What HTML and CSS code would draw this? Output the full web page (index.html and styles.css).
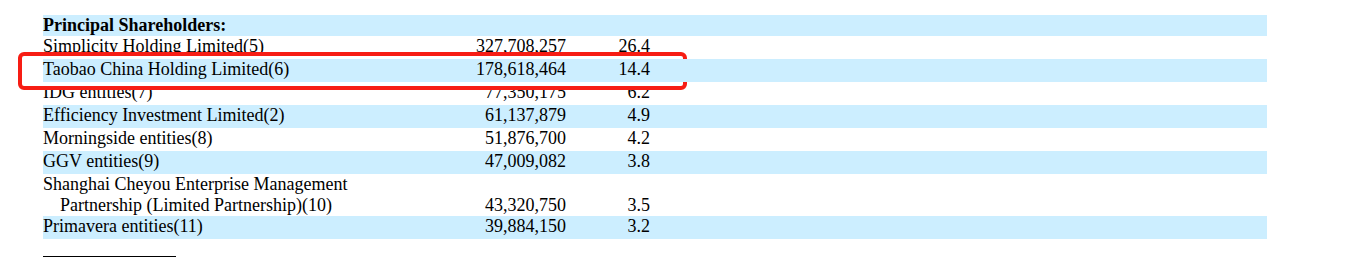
FILE: index.html
```html
<!DOCTYPE html>
<html>
<head>
<meta charset="utf-8">
<link rel="stylesheet" href="styles.css">
</head>
<body>
<div class="sheet">
  <div class="row head band"><div class="label">Principal Shareholders:</div><div></div><div></div><div></div></div>
  <div class="row"><div class="label">Simplicity Holding Limited(5)</div><div class="num">327,708,257</div><div class="pct">26.4</div><div></div></div>
  <div class="row band focus"><div class="label">Taobao China Holding Limited(6)</div><div class="num">178,618,464</div><div class="pct">14.4</div><div></div></div>
  <div class="row"><div class="label">IDG entities(7)</div><div class="num">77,350,175</div><div class="pct">6.2</div><div></div></div>
  <div class="row band"><div class="label">Efficiency Investment Limited(2)</div><div class="num">61,137,879</div><div class="pct">4.9</div><div></div></div>
  <div class="row"><div class="label">Morningside entities(8)</div><div class="num">51,876,700</div><div class="pct">4.2</div><div></div></div>
  <div class="row band"><div class="label">GGV entities(9)</div><div class="num">47,009,082</div><div class="pct">3.8</div><div></div></div>
  <div class="row two"><div class="label">Shanghai Cheyou Enterprise Management<br><span class="indent">Partnership (Limited Partnership)(10)</span></div><div class="num">43,320,750</div><div class="pct">3.5</div><div></div></div>
  <div class="row band"><div class="label">Primavera entities(11)</div><div class="num">39,884,150</div><div class="pct">3.2</div><div></div></div>
  <div class="rule"></div>
  <div class="mark"></div>
</div>
</body>
</html>
```

FILE: styles.css
```css
html, body {
  margin: 0;
  padding: 0;
  background: #ffffff;
}
.sheet {
  position: relative;
  padding: 15px 0 0 43px;
  width: 1224px;
  font-family: "Liberation Serif", "Times New Roman", serif;
  font-size: 18px;
  line-height: 21px;
  color: #000000;
}
.row {
  display: grid;
  grid-template-columns: 390px 133px 84px 1fr;
  min-height: 23px;
}
.row.head {
  min-height: 21px;
  height: 21px;
  font-weight: bold;
}
.band {
  background: #cceeff;
}
.focus {
  position: relative;
  z-index: 2;
}
.row.two {
  align-items: end;
}
.num, .pct {
  text-align: right;
}
.indent {
  padding-left: 17px;
}
.rule {
  width: 133px;
  height: 1px;
  background: #000000;
  margin-top: 17px;
}
.mark {
  position: absolute;
  left: 18px;
  top: 52px;
  width: 669px;
  height: 38px;
  box-sizing: border-box;
  border: 4px solid #f71d14;
  border-radius: 6px;
  background: #ffffff;
  z-index: 1;
}
```
